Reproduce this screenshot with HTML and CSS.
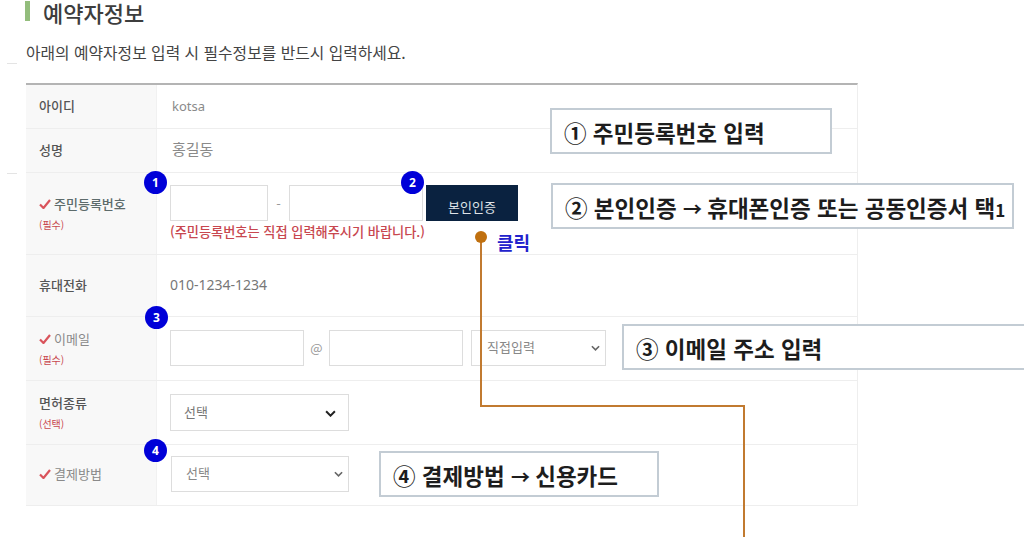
FILE: index.html
```html
<!DOCTYPE html>
<html lang="ko">
<head>
<meta charset="utf-8">
<title>예약자정보</title>
<link rel="stylesheet" href="styles.css">
</head>
<body>
<div class="page">
  <h2 class="title">예약자정보</h2>
  <p class="desc">아래의 예약자정보 입력 시 필수정보를 반드시 입력하세요.</p>
  <div class="table">
    <div class="row r1"><div class="label">아이디</div><div class="value text">kotsa</div></div>
    <div class="row r2"><div class="label">성명</div><div class="value text name">홍길동</div></div>
    <div class="row r3">
      <div class="label"><span class="req"><svg class="check" viewBox="0 0 12 10"><path d="M1 5.5 4.5 9 11 1"/></svg>주민등록번호</span><small>(필수)</small></div>
      <div class="value stack">
        <div class="fields">
          <span class="input w98"></span><span class="sep s-dash">-</span><span class="input w134"></span>
          <button class="btn" type="button">본인인증</button>
        </div>
        <div class="note">(주민등록번호는 직접 입력해주시기 바랍니다.)</div>
      </div>
    </div>
    <div class="row r4"><div class="label">휴대전화</div><div class="value text phone">010-1234-1234</div></div>
    <div class="row r5">
      <div class="label"><span class="req light"><svg class="check" viewBox="0 0 12 10"><path d="M1 5.5 4.5 9 11 1"/></svg>이메일</span><small>(필수)</small></div>
      <div class="value nudge">
        <div class="fields">
          <span class="input w134"></span><span class="sep s-at">@</span><span class="input w134"></span>
          <span class="select s-mail">직접입력<svg class="chev" viewBox="0 0 10 6"><path d="M1 1l4 4 4-4"/></svg></span>
        </div>
      </div>
    </div>
    <div class="row r6">
      <div class="label"><span>면허종류</span><small>(선택)</small></div>
      <div class="value"><span class="select s-license">선택<svg class="chev big" viewBox="0 0 10 6"><path d="M1 1l4 4 4-4"/></svg></span></div>
    </div>
    <div class="row r7">
      <div class="label"><span class="req light"><svg class="check" viewBox="0 0 12 10"><path d="M1 5.5 4.5 9 11 1"/></svg>결제방법</span></div>
      <div class="value nudge"><span class="select s-pay">선택<svg class="chev" viewBox="0 0 10 6"><path d="M1 1l4 4 4-4"/></svg></span></div>
    </div>
  </div>

  <i class="tick t1"></i><i class="tick t2"></i>

  <svg class="connector" viewBox="0 0 1024 537"><path d="M481 237V406H744V537"/><circle cx="481" cy="237" r="6"/></svg>
  <span class="click">클릭</span>

  <span class="badge b1">1</span>
  <span class="badge b2">2</span>
  <span class="badge b3">3</span>
  <span class="badge b4">4</span>

  <div class="callout c1">① 주민등록번호 입력</div>
  <div class="callout c2">② 본인인증 <span class="arrow">→</span> 휴대폰인증 또는 공동인증서 택<span class="digit">1</span></div>
  <div class="callout c3">③ 이메일 주소 입력</div>
  <div class="callout c4">④ 결제방법 <span class="arrow">→</span> 신용카드</div>
</div>
</body>
</html>
```

FILE: styles.css
```css
* { box-sizing: border-box; }
html, body { margin: 0; padding: 0; background: #fff; }
body { font-family: "Noto Sans CJK KR", "Noto Sans", sans-serif; color: #444; }
.page { position: relative; width: 1024px; height: 537px; overflow: hidden; }

.title {
  display: flex; gap: 13px;
  margin: 0 0 0 25px; height: 24px;
  font-size: 22px; line-height: 24px; font-weight: 500; color: #3d3d3d;
}
.title::before { content: ""; width: 5px; height: 20px; margin-top: 1px; background: #93bd7c; }
.desc {
  margin: 18px 0 0 26px; height: 22px;
  font-size: 15.8px; line-height: 22px; color: #444;
}
.table {
  margin: 19px 0 0 26px; width: 832px;
  border-top: 2px solid #b4b4b4;
  border-right: 1px solid #eee;
}
.row {
  display: grid; grid-template-columns: 131px 1fr;
  border-bottom: 1px solid #eee;
}
.r1 { height: 44px; }
.r2 { height: 44px; }
.r3 { height: 82px; }
.r4 { height: 62px; }
.r5 { height: 64px; }
.r6 { height: 64px; }
.r7 { height: 61px; }

.label {
  background: #f8f8f8; padding: 0 0 3px 13px;
  display: flex; flex-direction: column; justify-content: center;
  font-size: 13px; font-weight: 500; color: #555;
  border-right: 1px solid #f1f1f1;
}
.label small { font-size: 10px; line-height: 10px; margin-top: 7px; color: #c8474f; font-weight: 400; }
.req { display: flex; align-items: center; gap: 3px; color: #5d6b6b; }
.req.light { color: #8a8a8a; font-weight: 400; }
.check { width: 12px; height: 10px; fill: none; stroke: #d9535b; stroke-width: 2.2; }

.value { padding-left: 13px; display: flex; align-items: center; }
.nudge { padding-bottom: 2px; }
.text { font-family: "Noto Sans", "Noto Sans CJK KR", sans-serif; font-size: 13px; color: #8a8a8a; padding-left: 15px; padding-bottom: 2px; }
.name { font-family: "Noto Sans CJK KR", sans-serif; font-size: 15px; padding-bottom: 5px; }
.phone { padding-left: 13px; font-size: 14px; color: #777; }

.stack { flex-direction: column; align-items: flex-start; justify-content: flex-start; padding-top: 12px; }
.fields { display: flex; align-items: center; height: 36px; }
.input { display: block; height: 36px; background: #fff; border: 1px solid #ddd; }
.w98 { width: 98px; }
.w134 { width: 134px; }
.sep { color: #999; font-size: 13px; text-align: center; }
.s-dash { width: 21px; }
.s-at { width: 25px; }

.btn {
  margin-left: 3px; width: 92px; height: 36px; border: 0; padding: 7px 0 0;
  background: #0a2240; color: #dfe3e8;
  font: 400 13px "Noto Sans CJK KR", sans-serif;
}
.note { margin-top: 2px; font-size: 13.2px; line-height: 18px; font-weight: 500; color: #c8474f; white-space: nowrap; }

.select {
  position: relative; display: flex; align-items: center;
  height: 36px; background: #fff; border: 1px solid #ddd; padding-bottom: 3px;
  font-size: 13px; color: #888;
}
.s-mail { width: 135px; margin-left: 8px; padding-left: 15px; }
.s-license { width: 179px; height: 37px; padding-left: 13px; color: #777; }
.s-pay { width: 178px; margin-left: 1px; padding-left: 14px; }
.chev {
  position: absolute; right: 5px; top: 50%; width: 9px; height: 6px; margin-top: -3px;
  fill: none; stroke: #666; stroke-width: 1.8;
}
.chev.big { right: 12px; width: 11px; height: 7px; stroke: #222; stroke-width: 1.8; }

.tick { position: absolute; left: 7px; width: 10px; height: 1px; background: #e4e4e4; }
.t1 { top: 63px; }
.t2 { top: 173px; }

.connector { position: absolute; left: 0; top: 0; width: 1024px; height: 537px; pointer-events: none; }
.connector path { fill: none; stroke: #c17a30; stroke-width: 2; }
.connector circle { fill: #c0700f; }

.click { position: absolute; left: 497px; top: 230px; font-size: 18px; line-height: 24px; font-weight: 700; color: #2222cc; }

.badge {
  position: absolute; width: 23px; height: 23px; border-radius: 50%;
  background: #0000d8; color: #fff;
  font: 700 12px/23px "Noto Sans", sans-serif; text-align: center;
}
.b1 { left: 144px; top: 171px; }
.b2 { left: 401px; top: 171px; }
.b3 { left: 145px; top: 306px; }
.b4 { left: 144px; top: 439px; }

.callout {
  position: absolute; height: 46px; padding: 2px 0 0 12px;
  background: #fff; border: 2px solid #c3ccd4;
  font-size: 22.5px; line-height: 40px; font-weight: 700; color: #1d1d1d; white-space: nowrap;
  overflow: hidden;
}
.arrow { font-size: 19px; letter-spacing: -1px; }
.digit { font-size: 17px; }
.c1 { left: 550px; top: 108px; width: 282px; }
.c2 { left: 551px; top: 183px; width: 463px; }
.c3 { left: 622px; top: 324px; width: 410px; }
.c4 { left: 379px; top: 451px; width: 280px; }
```
